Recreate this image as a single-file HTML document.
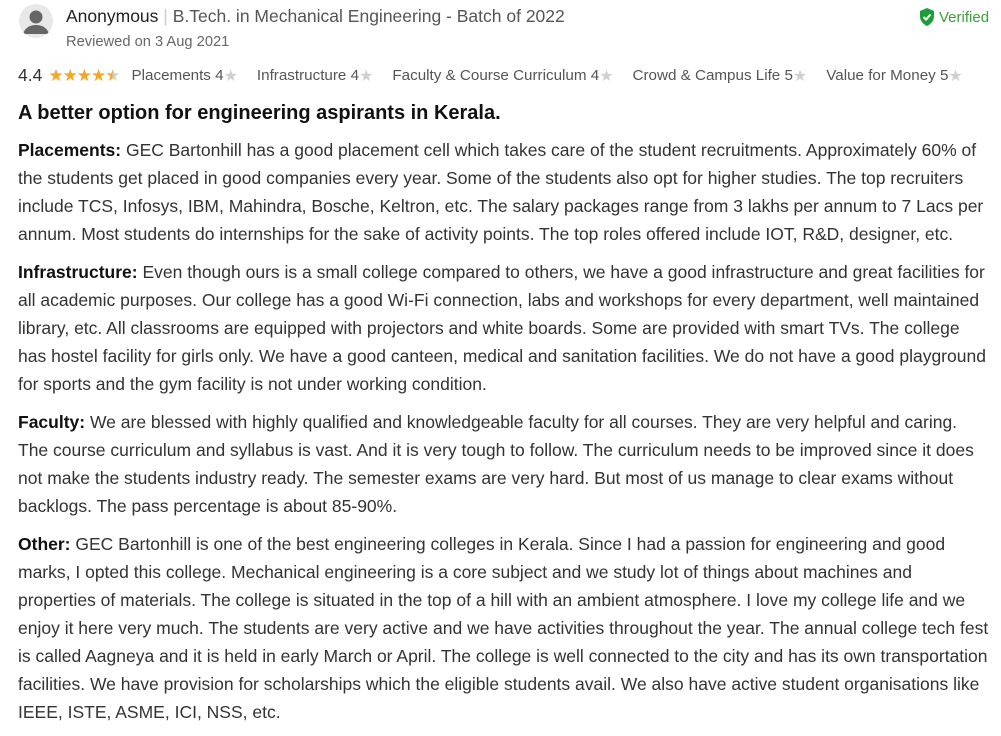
<!DOCTYPE html>
<html><head><meta charset="utf-8"><style>
body{margin:0;background:#fff;font-family:"Liberation Sans",Arial,sans-serif;color:#333;width:1001px;height:731px;overflow:hidden;position:relative}
.av{position:absolute;left:19px;top:4px;width:34px;height:34px;border-radius:50%;background:#e8e8e8;overflow:hidden}
.name{position:absolute;left:66px;top:6px;font-size:17.5px;color:#222;white-space:nowrap}
.name .sep{color:#ccc}
.name .c{color:#555}
.date{position:absolute;left:66px;top:34px;font-size:14.7px;color:#666}
.ver{position:absolute;left:919px;top:8px;font-size:15px;color:#3aa03a;display:flex;align-items:center;gap:4px}
.rt{position:absolute;left:18px;top:65px;font-size:15.2px;color:#555;white-space:nowrap;display:flex;align-items:center}
.rt .big{font-size:17.5px;color:#333;margin-right:6px}
.s{color:#f5a623;font-size:17px;letter-spacing:-1px}
.g{color:#d0d0d0;font-size:16px;margin-right:19px}
h1{position:absolute;left:18px;top:102px;margin:0;font-size:20px;font-weight:bold;color:#111}
.b{position:absolute;left:18px;top:136px;font-size:17.5px;line-height:28px;color:#333;white-space:nowrap}
.b p{margin:0 0 10px}
.b strong{color:#111}
</style></head><body>
<div class="av"><svg width="34" height="34" viewBox="0 0 34 34"><circle cx="17" cy="13" r="6.5" fill="#666"/><path d="M4 30c2-7 8-9 13-9s11 2 13 9z" fill="#666"/></svg></div>
<div class="name">Anonymous <span class="sep">|</span> <span class="c">B.Tech. in Mechanical Engineering - Batch of 2022</span></div>
<div class="date">Reviewed on 3 Aug 2021</div>
<div class="ver"><svg width="16" height="18" viewBox="0 0 16 18"><path d="M8 0L15 3v5c0 5-3 8-7 10C4 16 1 13 1 8V3z" fill="#1e9e3a"/><path d="M4.5 9l2.5 2.5 4.5-5" stroke="#fff" stroke-width="2" fill="none"/></svg>Verified</div>
<div class="rt"><span class="big">4.4</span><span class="s">★★★★</span><span class="s" style="background:linear-gradient(90deg,#f5a623 50%,#d0d0d0 50%);-webkit-background-clip:text;color:transparent;margin-right:12px">★</span>Placements 4<span class="g">★</span>Infrastructure 4<span class="g">★</span>Faculty &amp; Course Curriculum 4<span class="g">★</span>Crowd &amp; Campus Life 5<span class="g">★</span>Value for Money 5<span class="g">★</span></div>
<h1>A better option for engineering aspirants in Kerala.</h1>
<div class="b">
<p><strong>Placements:</strong> GEC Bartonhill has a good placement cell which takes care of the student recruitments. Approximately 60% of<br>the students get placed in good companies every year. Some of the students also opt for higher studies. The top recruiters<br>include TCS, Infosys, IBM, Mahindra, Bosche, Keltron, etc. The salary packages range from 3 lakhs per annum to 7 Lacs per<br>annum. Most students do internships for the sake of activity points. The top roles offered include IOT, R&amp;D, designer, etc.</p>
<p><strong>Infrastructure:</strong> Even though ours is a small college compared to others, we have a good infrastructure and great facilities for<br>all academic purposes. Our college has a good Wi-Fi connection, labs and workshops for every department, well maintained<br>library, etc. All classrooms are equipped with projectors and white boards. Some are provided with smart TVs. The college<br>has hostel facility for girls only. We have a good canteen, medical and sanitation facilities. We do not have a good playground<br>for sports and the gym facility is not under working condition.</p>
<p><strong>Faculty:</strong> We are blessed with highly qualified and knowledgeable faculty for all courses. They are very helpful and caring.<br>The course curriculum and syllabus is vast. And it is very tough to follow. The curriculum needs to be improved since it does<br>not make the students industry ready. The semester exams are very hard. But most of us manage to clear exams without<br>backlogs. The pass percentage is about 85-90%.</p>
<p><strong>Other:</strong> GEC Bartonhill is one of the best engineering colleges in Kerala. Since I had a passion for engineering and good<br>marks, I opted this college. Mechanical engineering is a core subject and we study lot of things about machines and<br>properties of materials. The college is situated in the top of a hill with an ambient atmosphere. I love my college life and we<br>enjoy it here very much. The students are very active and we have activities throughout the year. The annual college tech fest<br>is called Aagneya and it is held in early March or April. The college is well connected to the city and has its own transportation<br>facilities. We have provision for scholarships which the eligible students avail. We also have active student organisations like<br>IEEE, ISTE, ASME, ICI, NSS, etc.</p>
</div>
</body></html>
